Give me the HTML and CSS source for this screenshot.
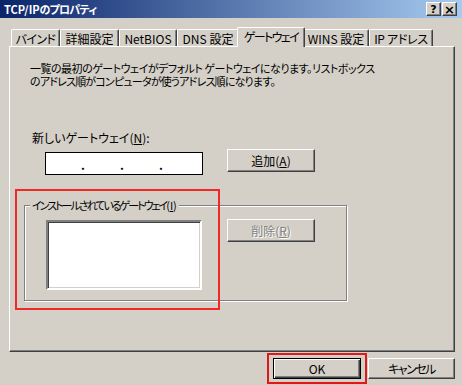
FILE: index.html
```html
<!DOCTYPE html>
<html>
<head>
    <meta charset="utf-8">
    <title>TCP/IPのプロパティ</title>
    <link rel="stylesheet" href="styles.css">
</head>
<body>
    <div class="window">
        <div class="titlebar">
            <span class="title">TCP/IP<span class="title-ja">のプロパティ</span></span>
            <div class="caption-buttons">
                <span class="caption-btn">?</span>
                <span class="caption-btn close">×</span>
            </div>
        </div>

        <div class="tabs">
            <div class="tab w-bind">バインド</div>
            <div class="tab w-detail">詳細設定</div>
            <div class="tab w-netbios">NetBIOS</div>
            <div class="tab w-dns">DNS 設定</div>
            <div class="tab tab-active">ゲートウェイ</div>
            <div class="tab w-wins">WINS 設定</div>
            <div class="tab w-ip">IP アドレス</div>
        </div>

        <div class="panel">
            <div class="desc">
                <span class="desc-line1">一覧の最初のゲートウェイがデフォルト ゲートウェイになります。リストボックス</span>
                <span class="desc-line2">のアドレス順がコンピュータが使うアドレス順になります。</span>
            </div>

            <div class="label-new">新しいゲートウェイ(<u>N</u>):</div>
            <div class="row-new">
                <div class="ip-edit">
                    <span class="dot">.</span>
                    <span class="dot">.</span>
                    <span class="dot">.</span>
                </div>
                <button type="button" class="btn btn-add">追加(<u>A</u>)</button>
            </div>

            <div class="group-wrap marked">
                <div class="group">
                    <span class="legend">インストールされているゲートウェイ<span class="key">(<u>I</u>)</span></span>
                    <div class="listbox"></div>
                    <button type="button" class="btn btn-del" disabled>削除(<u>R</u>)</button>
                </div>
            </div>
        </div>

        <div class="footer">
            <div class="marked-ok">
                <button type="button" class="btn btn-default">OK</button>
            </div>
            <button type="button" class="btn btn-foot">キャンセル</button>
        </div>
    </div>
</body>
</html>
```

FILE: styles.css
```css
html, body {
    margin: 0;
    padding: 0;
}
body {
    width: 462px;
    height: 385px;
    overflow: hidden;
    background: #D4D0C8;
    font-family: "Noto Sans CJK JP", "Liberation Sans", sans-serif;
    font-size: 12px;
    font-feature-settings: "palt";
    color: #000;
}
u {
    text-decoration: underline;
    text-underline-offset: 1px;
}

/* title bar */
.titlebar {
    height: 18px;
    display: flex;
    align-items: center;
    justify-content: space-between;
    padding: 0 5px 0 4px;
    background: linear-gradient(to right, #0A246A, #A6CAF0);
}
.title {
    color: #fff;
    font-weight: bold;
    font-size: 11px;
    line-height: 18px;
    letter-spacing: 0;
}
.title-ja {
    letter-spacing: -0.8px;
}
.caption-buttons {
    display: flex;
    gap: 1px;
}
.caption-btn {
    box-sizing: border-box;
    width: 15px;
    height: 14px;
    display: flex;
    align-items: center;
    justify-content: center;
    background: #D4D0C8;
    border: 1px solid;
    border-color: #fff #404040 #404040 #fff;
    box-shadow: inset -1px -1px 0 #808080;
    font-family: "DejaVu Sans", sans-serif;
    font-weight: bold;
    font-size: 11px;
    line-height: 1;
}
.caption-btn.close {
    font-size: 13px;
}

/* tabs */
.tabs {
    display: flex;
    align-items: flex-end;
    height: 28px;
    margin-left: 11px;
    position: relative;
    z-index: 1;
}
.tab {
    box-sizing: border-box;
    height: 17px;
    display: flex;
    align-items: center;
    justify-content: center;
    border: 1px solid #fff;
    border-bottom: none;
    border-right-color: #404040;
    border-radius: 2px 2px 0 0;
    box-shadow: inset -1px 0 0 #808080;
    white-space: nowrap;
    padding-top: 1px;
}
.w-bind { width: 49px; letter-spacing: -0.6px; }
.w-detail { width: 59px; }
.w-netbios { width: 58px; }
.w-dns { width: 62px; }
.w-wins { width: 66px; }
.w-ip { width: 64px; letter-spacing: -0.3px; }
.tab-active {
    width: 68px;
    height: 20px;
    margin: 0 -2px 0 -2px;
    margin-bottom: -1px;
    background: #D4D0C8;
    position: relative;
    z-index: 2;
    padding-top: 0;
    padding-bottom: 2px;
    letter-spacing: -1.6px;
}

/* tab page */
.panel {
    box-sizing: border-box;
    width: 446px;
    height: 306px;
    margin-left: 9px;
    border: 1px solid;
    border-color: #fff #404040 #404040 #fff;
    box-shadow: inset -1px -1px 0 #808080;
    overflow: hidden;
}
.desc {
    margin: 15px 0 0 20px;
    font-size: 11px;
    line-height: 13px;
    white-space: nowrap;
}
.desc-line1 {
    display: block;
    letter-spacing: -0.5px;
}
.desc-line2 {
    display: block;
    letter-spacing: -0.8px;
}
.label-new {
    margin: 44px 0 0 22px;
    line-height: 12px;
}
.row-new {
    display: flex;
    align-items: flex-start;
    margin-top: 5px;
}
.ip-edit {
    box-sizing: border-box;
    width: 158px;
    height: 23px;
    margin: 3px 0 0 35px;
    background: #fff;
    border: 1px solid #000;
    display: flex;
    align-items: flex-end;
    gap: 35px;
    padding: 0 0 3px 35px;
}
.dot {
    width: 4px;
    text-align: center;
    font-weight: bold;
    line-height: 12px;
}

.btn {
    box-sizing: border-box;
    width: 88px;
    height: 23px;
    padding: 0;
    margin: 0;
    background: #D4D0C8;
    font-family: inherit;
    font-size: 12px;
    font-feature-settings: "palt";
    color: #000;
    border: 1px solid;
    border-color: #fff #404040 #404040 #fff;
    box-shadow: inset -1px -1px 0 #808080;
    border-radius: 0;
}
.btn-add {
    margin-left: 24px;
}
.btn:disabled {
    color: #808080;
    text-shadow: 1px 1px 0 #fff;
}

/* group box */
.group-wrap {
    margin: 30px 0 0 14px;
    position: relative;
    width: 325px;
}
.marked::after {
    content: "";
    position: absolute;
    left: -9px;
    top: -16px;
    width: 201px;
    height: 117px;
    border: 2px solid #F02828;
}
.group {
    box-sizing: border-box;
    width: 323px;
    height: 96px;
    border: 1px solid #808080;
    box-shadow: inset 1px 1px 0 #fff, 1px 1px 0 #fff;
    position: relative;
    display: flex;
    align-items: flex-start;
    padding: 14px 0 0 21px;
}
.legend {
    position: absolute;
    left: 5px;
    top: -7px;
    padding: 0 2px;
    background: #D4D0C8;
    font-size: 11px;
    line-height: 12px;
    letter-spacing: -2px;
    white-space: nowrap;
}
.legend .key {
    letter-spacing: 0;
}
.listbox {
    box-sizing: border-box;
    width: 156px;
    height: 70px;
    background: #fff;
    border: 2px solid;
    border-color: #808080 #fff #fff #808080;
    box-shadow: inset 1px 1px 0 #404040, inset -1px -1px 0 #D4D0C8;
}
.btn-del {
    margin: -1px 0 0 25px;
}

/* bottom buttons */
.footer {
    display: flex;
    justify-content: flex-end;
    gap: 7px;
    margin-top: 6px;
    padding-right: 7px;
}
.btn-foot {
    width: 87px;
    height: 21px;
    letter-spacing: -1.5px;
}
.marked-ok {
    position: relative;
}
.marked-ok::after {
    content: "";
    position: absolute;
    left: -6px;
    top: -5px;
    right: -6px;
    bottom: -5px;
    border: 2px solid #E01818;
}
.btn-default {
    height: 21px;
    border: 1px solid #000;
    box-shadow: inset 1px 1px 0 #fff, inset -1px -1px 0 #404040, inset -2px -2px 0 #808080;
}
```
